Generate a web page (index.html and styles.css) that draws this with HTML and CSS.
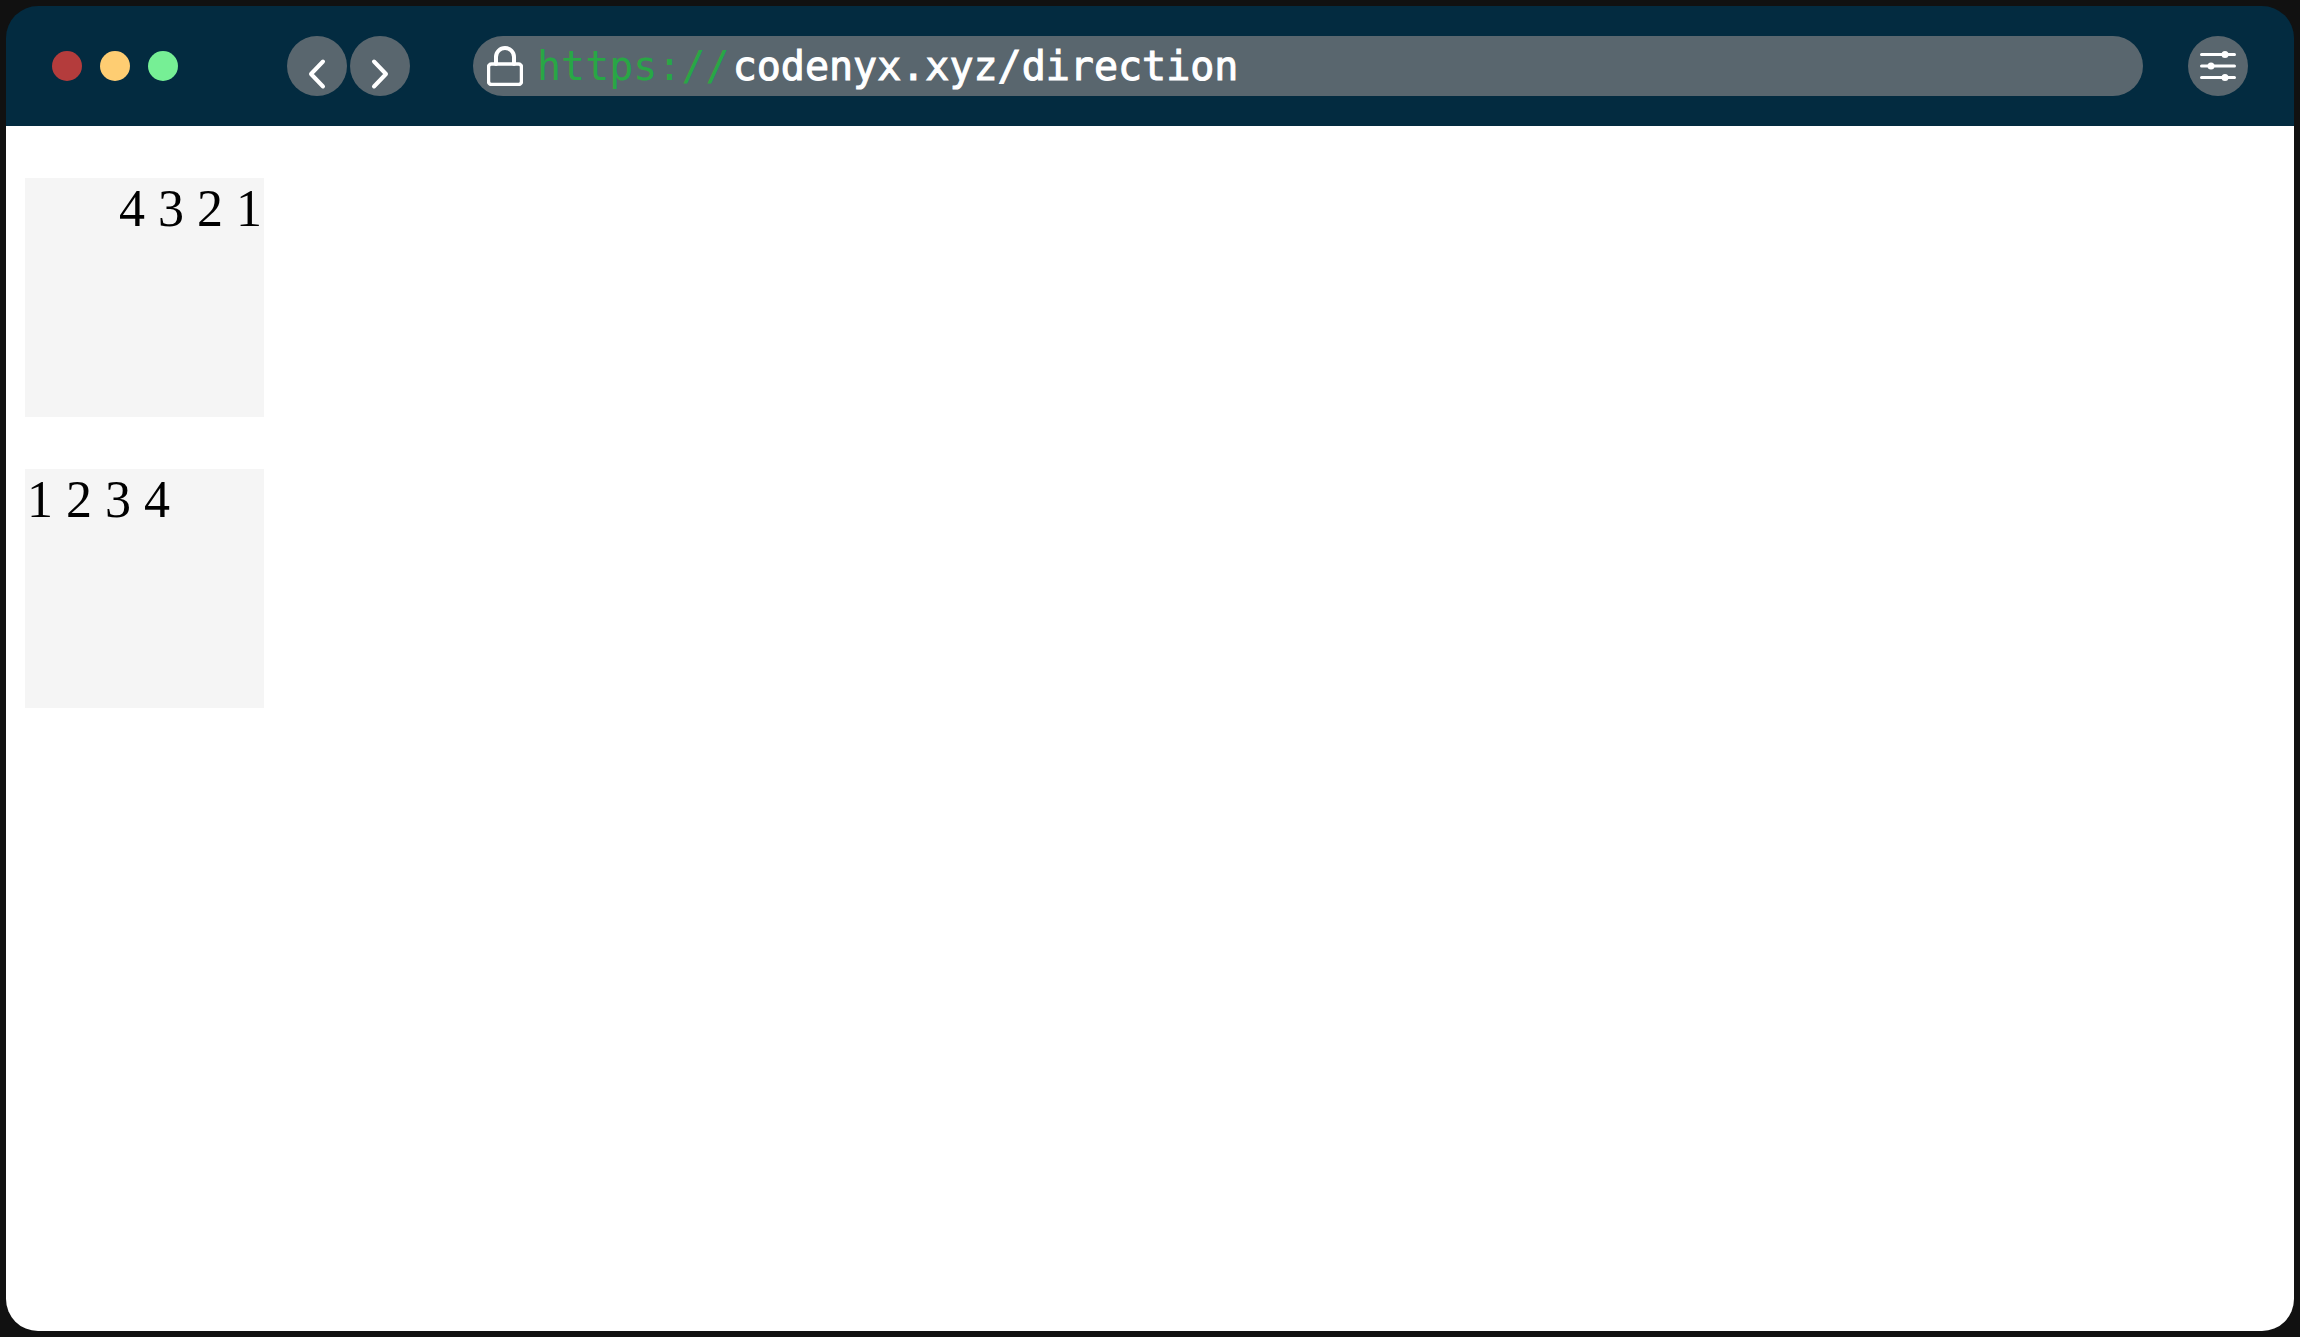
FILE: index.html
```html
<!DOCTYPE html>
<html lang="en">
<head>
    <meta charset="UTF-8">
    <meta name="viewport" content="width=device-width, initial-scale=1">
    <title>direction</title>
    <link rel="stylesheet" href="styles.css">
</head>
<body>

	<div class="window">
		<header class="toolbar">
			<div class="dots">
				<span class="dot red"></span>
				<span class="dot yellow"></span>
				<span class="dot green"></span>
			</div>

			<nav class="nav">
				<button type="button" class="round" aria-label="Back">
					<svg viewBox="0 0 60 60"><path d="M36 25.5L24 38L36 50.5" stroke-width="4"/></svg>
				</button>
				<button type="button" class="round" aria-label="Forward">
					<svg viewBox="0 0 60 60"><path d="M24 25.5L36 38L24 50.5" stroke-width="4"/></svg>
				</button>
			</nav>

			<div class="address">
				<svg class="lock" viewBox="0 0 36 40">
					<path d="M9 18V11a9 9 0 0 1 18 0V18" stroke-width="4"/>
					<rect x="1.5" y="18" width="33" height="20.5" rx="3" stroke-width="3.5"/>
				</svg>
				<label class="scheme" for="url">https://</label>
				<input class="url" id="url" type="text" value="codenyx.xyz/direction" spellcheck="false">
			</div>

			<button type="button" class="round" aria-label="Settings">
				<svg viewBox="0 0 60 60">
					<path d="M13.5 18.5H46.5M13.5 30H46.5M13.5 41.5H46.5" stroke-width="3"/>
					<g class="knobs">
						<circle cx="37" cy="18.5" r="3.5"/>
						<circle cx="23" cy="30" r="3.5"/>
						<circle cx="37" cy="41.5" r="3.5"/>
					</g>
				</svg>
			</button>
		</header>

		<main class="page">
			<div class="box rtl">1 2 3 4</div>
			<div class="box ltr">1 2 3 4</div>
		</main>
	</div>

</body>
</html>
```

FILE: styles.css
```css
:root {
	--frame: #111111;
	--bar: #032b40;
	--control: #59666e;
	--mono: "DejaVu Sans Mono", monospace;
}
* {
	box-sizing: border-box;
}
body {
	margin: 0;
	padding: 6px;
	min-height: 100vh;
	display: flex;
	background-color: var(--frame);
}
.window {
	flex: 1;
	min-width: 0;
	display: flex;
	flex-direction: column;
	border-radius: 32px;
	overflow: hidden;
}

/* toolbar */
.toolbar {
	display: flex;
	align-items: center;
	padding: 30px 46px;
	background-color: var(--bar);
}
.dots {
	display: flex;
	gap: 18px;
	margin-right: 109px;
}
.dot {
	width: 30px;
	height: 30px;
	border-radius: 50%;
}
.red { background-color: #b43c3c; }
.yellow { background-color: #fecd72; }
.green { background-color: #76ef95; }
.nav {
	display: flex;
	gap: 3px;
	margin-right: 63px;
}
.round {
	flex: none;
	width: 60px;
	height: 60px;
	padding: 0;
	border: 0;
	border-radius: 50%;
	background-color: var(--control);
	cursor: pointer;
}
svg {
	display: block;
	fill: none;
	stroke: white;
	stroke-linecap: round;
	stroke-linejoin: round;
}
.knobs {
	fill: white;
	stroke: none;
}
.address {
	flex: 1;
	min-width: 0;
	height: 60px;
	margin-right: 45px;
	padding: 0 30px 0 14px;
	display: flex;
	align-items: center;
	background-color: var(--control);
	border-radius: 30px;
}
.lock {
	flex: none;
	width: 36px;
	height: 40px;
	margin-right: 14px;
}
.scheme, .url {
	font-family: var(--mono);
	font-size: 40px;
	line-height: 60px;
}
.scheme {
	color: #28a745;
}
.url {
	flex: 1;
	min-width: 0;
	height: 60px;
	padding: 0 0 0 3px;
	border: 0;
	outline: 0;
	background: none;
	color: white;
	-webkit-text-stroke: 1px white;
}

/* page */
.page {
	flex: 1;
	padding: 0 19px;
	background-color: white;
}
.box {
	width: 239px;
	height: 239px;
	margin: 52px 0;
	padding: 0 2px;
	background-color: #f5f5f5;
	color: black;
	font-family: "Liberation Serif", serif;
	font-size: 52px;
	line-height: 62px;
}
.rtl { direction: rtl; }
.ltr { direction: ltr; }
```
